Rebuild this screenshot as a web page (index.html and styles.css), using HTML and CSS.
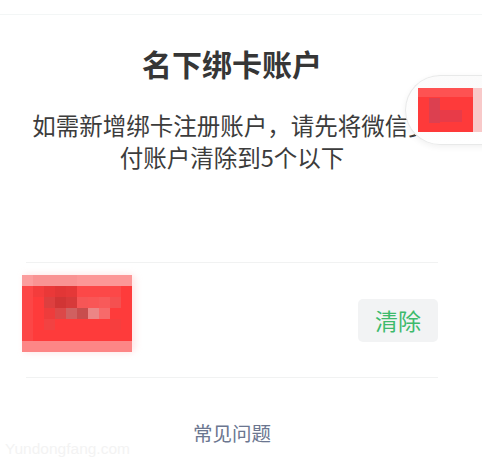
FILE: index.html
```html
<!DOCTYPE html>
<html lang="zh-CN">
<head>
<meta charset="utf-8">
<title>名下绑卡账户</title>
<link rel="stylesheet" href="styles.css">
</head>
<body>
<div class="page">
  <div class="topbar"></div>
  <main class="content">
    <h1 class="title">名下绑卡账户</h1>
    <p class="desc">如需新增绑卡注册账户，请先将微信支付账户清除到5个以下</p>
    <div class="account-row">
      <div class="redacted">
        <svg width="110" height="77" viewBox="0 0 110 77" shape-rendering="crispEdges">
          <rect x="0" y="0" width="110" height="77" fill="#fe3b3b"/>
          <rect x="0" y="0" width="110" height="11" fill="#f99393"/>
          <rect x="0" y="0" width="11" height="11" fill="#fb9d9d"/>
          <rect x="55" y="0" width="55" height="11" fill="#fc9797"/>
          <rect x="0" y="66" width="110" height="11" fill="#fd8686"/>
          <rect x="0" y="11" width="11" height="55" fill="#fc4646"/>
          <rect x="11" y="11" width="11" height="11" fill="#f43c3c"/>
          <rect x="22" y="11" width="11" height="11" fill="#ea3838"/>
          <rect x="33" y="11" width="11" height="11" fill="#e23636"/>
          <rect x="44" y="11" width="11" height="11" fill="#e53838"/>
          <rect x="55" y="11" width="44" height="11" fill="#fc4848"/>
          <rect x="22" y="22" width="11" height="11" fill="#dd3f3f"/>
          <rect x="33" y="22" width="11" height="11" fill="#d13535"/>
          <rect x="44" y="22" width="11" height="11" fill="#d73a3a"/>
          <rect x="55" y="22" width="11" height="11" fill="#f65656"/>
          <rect x="66" y="22" width="11" height="11" fill="#f95656"/>
          <rect x="77" y="22" width="11" height="11" fill="#f85a5a"/>
          <rect x="88" y="22" width="11" height="11" fill="#f55050"/>
          <rect x="22" y="33" width="11" height="11" fill="#ee3c3c"/>
          <rect x="33" y="33" width="11" height="11" fill="#dc4848"/>
          <rect x="44" y="33" width="11" height="11" fill="#d06060"/>
          <rect x="55" y="33" width="11" height="11" fill="#c84d4d"/>
          <rect x="66" y="33" width="11" height="11" fill="#ec8585"/>
          <rect x="77" y="33" width="11" height="11" fill="#f76a6a"/>
          <rect x="22" y="44" width="11" height="11" fill="#f24242"/>
          <rect x="88" y="44" width="11" height="11" fill="#f63e3e"/>
        </svg>
      </div>
      <button class="clear-btn" type="button">清除</button>
    </div>
    <div class="faq">常见问题</div>
  </main>

  <div class="float-pill">
    <svg class="pill-img" width="64" height="44" viewBox="0 0 64 44" shape-rendering="crispEdges">
      <rect x="0" y="0" width="55" height="44" fill="#fe3a3a"/>
      <rect x="0" y="0" width="55" height="9" fill="#fe5252"/>
      <rect x="11" y="10" width="11" height="25" fill="#dc4050"/>
      <rect x="22" y="22" width="22" height="12" fill="#e83b48"/>
      <rect x="55" y="0" width="9" height="44" fill="#f8c9c9"/>
    </svg>
  </div>

  <div class="watermark">Yundongfang.com</div>
</div>
</body>
</html>
```

FILE: styles.css
```css
html, body {
  margin: 0;
  padding: 0;
  background: #ffffff;
}

body {
  font-family: "Noto Sans CJK SC", "Noto Sans", sans-serif;
}

.page {
  position: relative;
  width: 482px;
  height: 462px;
  overflow: hidden;
  background: #ffffff;
}

.topbar {
  height: 14px;
  border-bottom: 1px solid #f3f6f6;
}

.content {
  width: 412px;
  margin-left: 26px;
  display: flex;
  flex-direction: column;
}

.title {
  margin: 27px 0 0;
  font-size: 30px;
  line-height: 42px;
  font-weight: 700;
  color: #363636;
  text-align: center;
}

.desc {
  margin: 25px 0 0;
  font-size: 23.5px;
  line-height: 32px;
  color: #3c3c3c;
  text-align: center;
}

.account-row {
  margin-top: 89px;
  height: 114px;
  border-top: 1px solid #f1f2f2;
  border-bottom: 1px solid #f1f2f2;
  display: flex;
  justify-content: space-between;
  align-items: center;
}

.redacted {
  align-self: flex-start;
  margin-top: 12px;
  margin-left: -4px;
  width: 110px;
  height: 77px;
  border-radius: 0 6px 6px 0;
  box-shadow: 3px 0 6px 1px rgba(255, 190, 190, 0.35);
}

.redacted svg {
  display: block;
}

.clear-btn {
  width: 80px;
  height: 43px;
  margin: 0;
  padding: 0;
  border: none;
  border-radius: 5px;
  background: #f2f3f4;
  color: #3dba6c;
  font-family: "Noto Sans CJK SC", sans-serif;
  font-size: 23px;
  line-height: 43px;
  text-align: center;
}

.faq {
  margin-top: 41px;
  font-size: 19.5px;
  line-height: 28px;
  color: #6b7690;
  text-align: center;
}

.float-pill {
  position: absolute;
  left: 405px;
  top: 75px;
  width: 110px;
  height: 68px;
  border: 1px solid #e8e9e9;
  border-right: none;
  border-radius: 35px 0 0 35px;
  background: linear-gradient(#fbfbfb, #ffffff);
  box-shadow: 0 2px 6px rgba(0, 0, 0, 0.06);
}

.pill-img {
  position: absolute;
  left: 12px;
  top: 12px;
  display: block;
}

.watermark {
  position: absolute;
  left: 5px;
  top: 440px;
  font-family: "Liberation Sans", Arial, sans-serif;
  font-size: 15.5px;
  line-height: 18px;
  color: #f3f3f3;
}
```
